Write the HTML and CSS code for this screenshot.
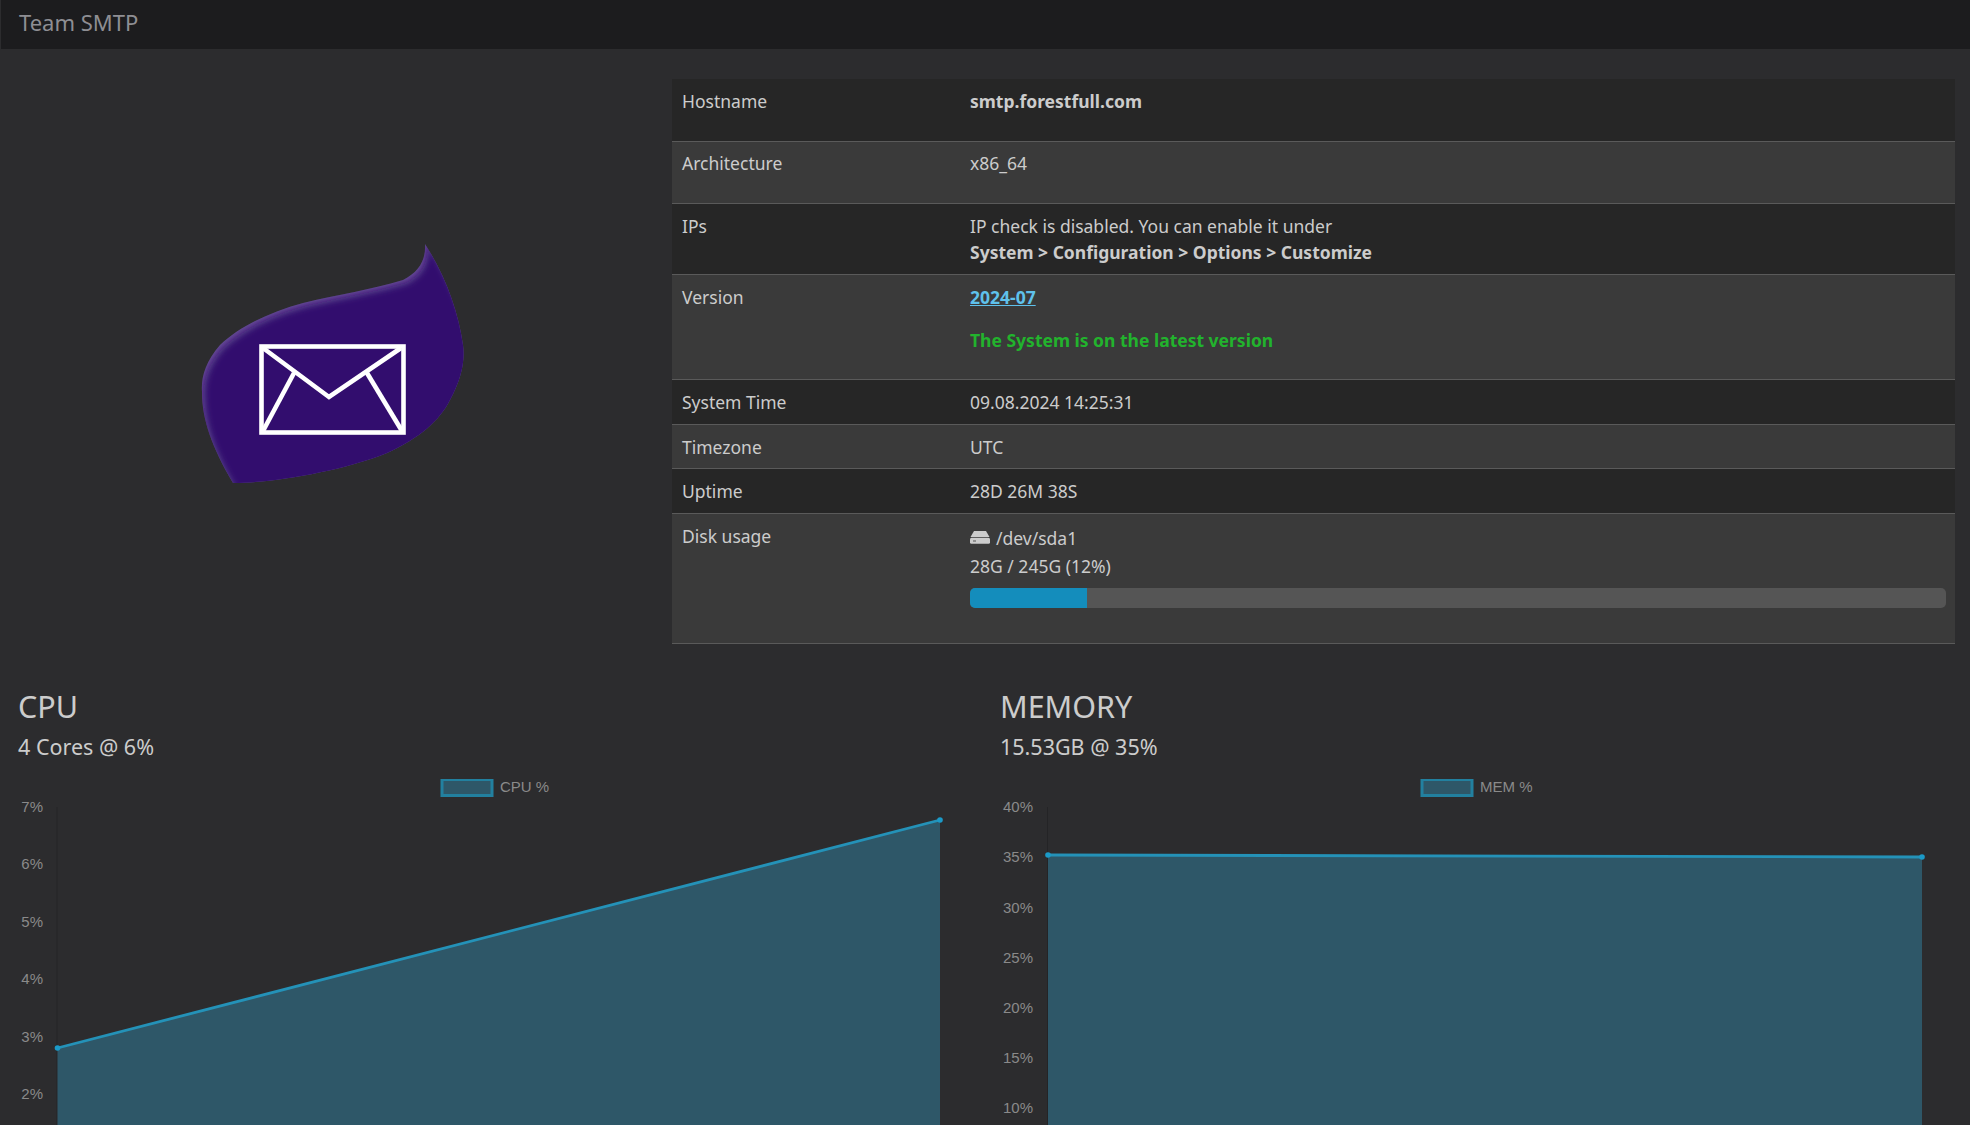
FILE: index.html
```html
<!DOCTYPE html>
<html lang="en">
<head>
    <meta charset="UTF-8">
    <meta name="viewport" content="width=device-width, initial-scale=1.0">
    <title>Team SMTP</title>
    <link rel="stylesheet" href="styles.css">
</head>
<body>
    <header class="navbar">Team SMTP</header>

    <section class="overview">
        <div class="logo-col">
            <svg class="logo" width="264" height="242" viewBox="200 243 264 242">
                <defs>
                    <clipPath id="leaf-clip">
                        <path d="M425 244C426 260 419 272 403 280C370 290 340 294 303 303C270 312 240 326 220 345C205 362 201 378 202 392C202 420 212 447 233 483C270 483 340 472 387 453C420 438 440 420 450 400C462 378 465 360 463 345C458 310 445 275 425 244Z"/>
                    </clipPath>
                    <filter id="leaf-blur" x="-10%" y="-10%" width="120%" height="120%">
                        <feGaussianBlur stdDeviation="3.5"/>
                    </filter>
                    <filter id="env-blur" x="-5%" y="-5%" width="110%" height="110%">
                        <feGaussianBlur stdDeviation="0.6"/>
                    </filter>
                </defs>
                <g clip-path="url(#leaf-clip)">
                    <rect x="200" y="243" width="264" height="242" fill="#664e96"/>
                    <path transform="translate(4 5)" filter="url(#leaf-blur)" fill="#330e6e" stroke="#330e6e" stroke-width="4" d="M425 244C426 260 419 272 403 280C370 290 340 294 303 303C270 312 240 326 220 345C205 362 201 378 202 392C202 420 212 447 233 483L233 495L470 495L470 345C458 310 445 275 425 244Z"/>
                </g>
                <g fill="none" stroke="#fff" stroke-width="4.6" filter="url(#env-blur)">
                    <rect x="261.5" y="346.5" width="142" height="86"/>
                    <path d="M263 348L329 397L401 348"/>
                    <path d="M294 373L263 431"/>
                    <path d="M367 373L402 431"/>
                </g>
            </svg>
        </div>

        <table class="info">
            <tr class="row-host"><td>Hostname</td><td><b>smtp.forestfull.com</b></td></tr>
            <tr class="row-arch"><td>Architecture</td><td>x86_64</td></tr>
            <tr class="row-ips"><td>IPs</td><td>IP check is disabled. You can enable it under<br><b>System &gt; Configuration &gt; Options &gt; Customize</b></td></tr>
            <tr class="row-version">
                <td>Version</td>
                <td>
                    <a href="#" class="version-link">2024-07</a>
                    <p class="latest">The System is on the latest version</p>
                </td>
            </tr>
            <tr class="row-small"><td>System Time</td><td>09.08.2024 14:25:31</td></tr>
            <tr class="row-zone"><td>Timezone</td><td>UTC</td></tr>
            <tr class="row-small"><td>Uptime</td><td>28D 26M 38S</td></tr>
            <tr class="row-disk">
                <td>Disk usage</td>
                <td>
                    <div class="disk-name">
                        <svg class="disk-icon" width="20" height="13" viewBox="0 0 20 13">
                            <path fill="#ccc" d="M4 0H16L19.5 6H.5Z"/>
                            <rect fill="#ccc" y="6.8" width="20" height="6" rx="1.5"/>
                            <rect fill="#555" x="3" y="9.5" width="3" height="1"/>
                        </svg>
                        /dev/sda1
                    </div>
                    <div class="disk-size">28G / 245G (12%)</div>
                    <div class="disk-bar"><div class="disk-fill" style="width: 12%"></div></div>
                </td>
            </tr>
        </table>
    </section>

    <section class="charts">
        <div class="chart-col chart-cpu">
            <h2>CPU</h2>
            <h4>4 Cores @ 6%</h4>
            <svg class="chart" width="960" height="400" viewBox="0 780 960 400">
                <rect class="legend-box" x="442" y="780.5" width="50" height="16"/>
                <text class="legend-text" x="500" y="793">CPU %</text>
                <line class="axis" x1="57" y1="808" x2="57" y2="1180"/>
                <g class="ticks" text-anchor="end">
                    <text x="43" y="813">7%</text>
                    <text x="43" y="870">6%</text>
                    <text x="43" y="928">5%</text>
                    <text x="43" y="985">4%</text>
                    <text x="43" y="1043">3%</text>
                    <text x="43" y="1100">2%</text>
                </g>
                <path class="area" d="M57.5 1049L940 821V1180H57.5Z"/>
                <path class="line" d="M57.5 1049L940 821"/>
                <circle class="dot" cx="57.5" cy="1049" r="2.8"/>
                <circle class="dot" cx="940" cy="821" r="2.8"/>
            </svg>
        </div>
        <div class="chart-col chart-mem">
            <h2>MEMORY</h2>
            <h4>15.53GB @ 35%</h4>
            <svg class="chart" width="960" height="400" viewBox="980 780 960 400">
                <rect class="legend-box" x="1422" y="780.5" width="50" height="16"/>
                <text class="legend-text" x="1480" y="793">MEM %</text>
                <line class="axis" x1="1047.5" y1="808" x2="1047.5" y2="1180"/>
                <g class="ticks" text-anchor="end">
                    <text x="1033" y="813">40%</text>
                    <text x="1033" y="863">35%</text>
                    <text x="1033" y="914">30%</text>
                    <text x="1033" y="964">25%</text>
                    <text x="1033" y="1014">20%</text>
                    <text x="1033" y="1064">15%</text>
                    <text x="1033" y="1114">10%</text>
                </g>
                <path class="area" d="M1048 856L1922 858V1180H1048Z"/>
                <path class="line" d="M1048 856L1922 858"/>
                <circle class="dot" cx="1048" cy="856" r="2.8"/>
                <circle class="dot" cx="1922" cy="858" r="2.8"/>
            </svg>
        </div>
    </section>
</body>
</html>
```

FILE: styles.css
```css
html, body {
    height: 100%;
    overflow: hidden;
}
body {
    margin: 0;
    background-color: #2c2c2e;
    color: #ccc;
    font-family: "Noto Sans", sans-serif;
    font-size: 17.5px;
    line-height: 26px;
}
.navbar {
    height: 49px;
    box-sizing: border-box;
    padding: 9px 18px 0;
    background-color: #1c1c1e;
    border-left: 1px solid #2c2c2e;
    color: #8e8e93;
    font-size: 22px;
}
.overview {
    display: flex;
    align-items: center;
    padding: 30px 15px 0 0;
}
.logo-col {
    width: 672px;
    flex: none;
    display: flex;
    justify-content: center;
    padding: 5px 8px 0 0;
    box-sizing: border-box;
}
.logo {
    display: block;
}
.info {
    flex: 1;
    border-collapse: collapse;
}
.info tr:nth-child(odd) {
    background-color: #262626;
}
.info tr:nth-child(even) {
    background-color: #3a3a3a;
}
.info td {
    border-bottom: 1px solid #5a5a5a;
    padding: 9px 9px 0;
    vertical-align: top;
    box-sizing: border-box;
}
.info td:first-child {
    width: 289px;
    padding-left: 10px;
}
.row-host, .row-arch {
    height: 62px;
}
.info .row-arch td {
    padding-top: 8px;
}
.row-ips {
    height: 71px;
}
.row-version {
    height: 105px;
}
.row-small {
    height: 45px;
}
.row-zone {
    height: 44px;
}
.row-disk {
    height: 130px;
}
.version-link {
    color: #5fc1ec;
    font-weight: bold;
}
.latest {
    margin: 17px 0 0;
    color: #22b32d;
    font-weight: bold;
}
.disk-name {
    display: flex;
    align-items: center;
    gap: 6px;
    padding-top: 2px;
}
.disk-size {
    margin-top: 2px;
}
.disk-bar {
    height: 20px;
    margin-top: 9px;
    background-color: #555;
    border-radius: 5px;
    overflow: hidden;
}
.disk-fill {
    height: 100%;
    background-color: #148dbc;
}
.charts {
    display: grid;
    grid-template-columns: 980px 1fr;
    padding-top: 42px;
}
.chart-col h2 {
    margin: 0;
    font-size: 30.5px;
    font-weight: normal;
    line-height: 40px;
}
.chart-col h4 {
    margin: 3px 0 15px;
    font-size: 21.5px;
    font-weight: normal;
    line-height: 35px;
}
.chart-cpu h2, .chart-cpu h4 {
    padding-left: 18px;
}
.chart-mem h2, .chart-mem h4 {
    padding-left: 20px;
}
.chart {
    display: block;
}
.legend-box {
    fill: #2e5768;
    stroke: #22809f;
    stroke-width: 3;
}
.legend-text, .ticks text {
    font-family: "Liberation Sans", sans-serif;
    font-size: 15px;
    fill: #8a8a8a;
}
.axis {
    stroke: #242426;
    stroke-width: 1;
}
.area {
    fill: #2e5768;
}
.line {
    fill: none;
    stroke: #2492b8;
    stroke-width: 2.8;
}
.dot {
    fill: #1b9ac8;
}
```
